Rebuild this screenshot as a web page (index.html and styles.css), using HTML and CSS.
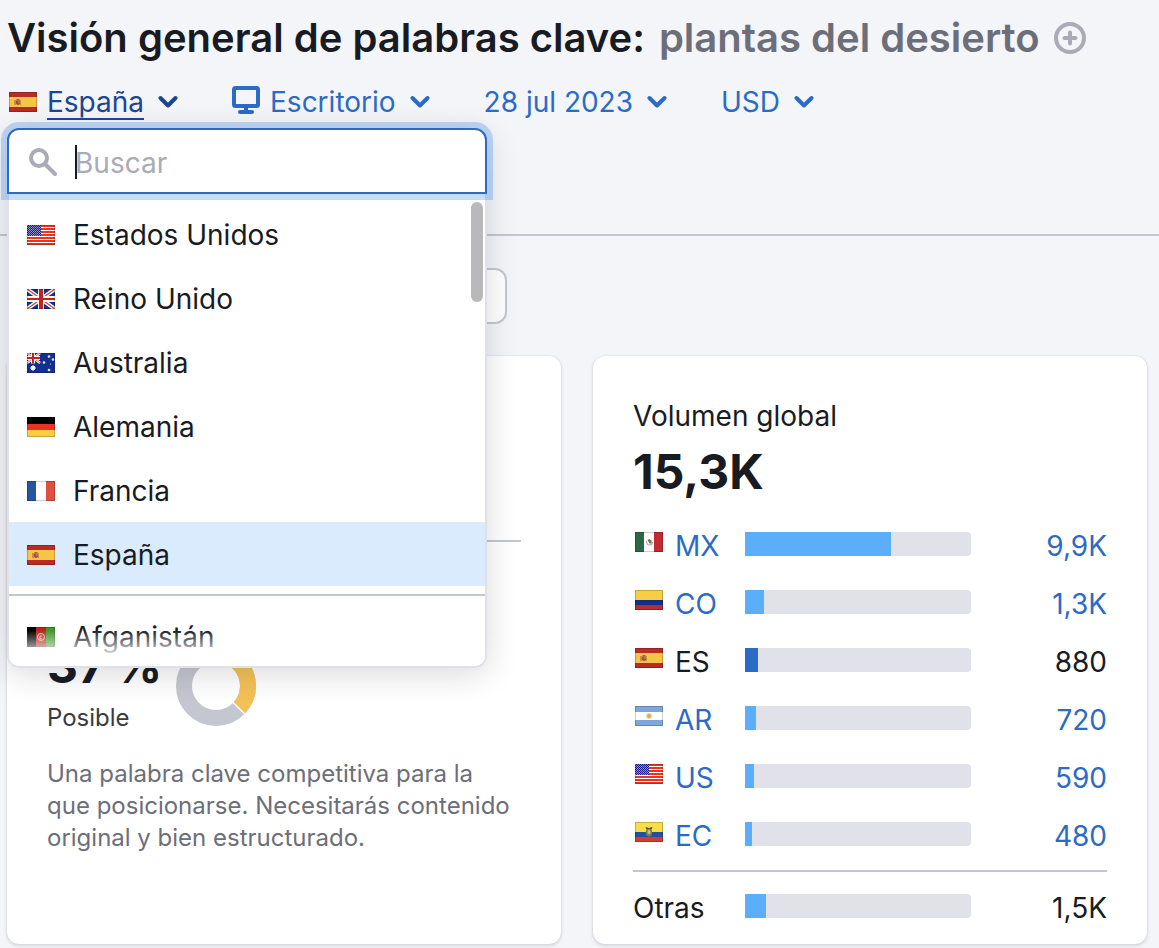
FILE: index.html
```html
<!DOCTYPE html>
<html lang="es">
<head>
    <meta charset="UTF-8">
    <meta name="viewport" content="width=device-width, initial-scale=1.0">
    <title>Visión general de palabras clave: plantas del desierto</title>
    <link rel="stylesheet" href="styles.css">
</head>
<body>
    <!-- Banderas e iconos reutilizables -->
    <svg class="sprite" aria-hidden="true">
        <defs>
            <pattern id="stars" width="2" height="2" patternUnits="userSpaceOnUse">
                <rect width="2" height="2" fill="#1a1a8c"/>
                <rect width="1" height="1" fill="#a0a0d0"/>
                <rect x="1" y="1" width="1" height="1" fill="#8080c0"/>
            </pattern>
            <symbol id="flag-es" viewBox="0 0 28 20">
                <rect width="28" height="20" fill="#b92b27"/>
                <rect y="5" width="28" height="10" fill="#f6c544"/>
                <rect x="5" y="8" width="2" height="5" fill="#c98a4a"/>
                <rect x="11" y="8" width="1" height="5" fill="#c98a4a"/>
                <path d="M7 8.500h4v3.500q-2 2-4 0z" fill="#b5483a"/>
                <path d="M7.500 7h3v1.500h-3z" fill="#9b6a2c"/>
                <rect x="9" y="9" width="2" height="2" fill="#8d8078"/>
            </symbol>
            <symbol id="flag-us" viewBox="0 0 28 20">
                <rect width="28" height="20" fill="#fff"/>
                <path d="M0 1h28M0 4h28M0 7h28M0 10h28M0 13h28M0 16h28M0 19h28" stroke="#ea3323" stroke-width="2"/>
                <rect width="14" height="11" fill="url(#stars)"/>
            </symbol>
            <symbol id="flag-gb" viewBox="0 0 28 20">
                <rect width="28" height="20" fill="#14308e"/>
                <path d="M0 0l28 20M28 0L0 20" stroke="#fff" stroke-width="4"/>
                <path d="M0 0l28 20M28 0L0 20" stroke="#c8483f" stroke-width="1.300"/>
                <path d="M14 0v20M0 10h28" stroke="#fff" stroke-width="6"/>
                <path d="M14 0v20" stroke="#c0241c" stroke-width="4"/>
                <path d="M0 10h28" stroke="#c0241c" stroke-width="2"/>
            </symbol>
            <symbol id="flag-au" viewBox="0 0 28 20">
                <rect width="28" height="20" fill="#14308e"/>
                <path d="M0 0l13 10M13 0L0 10" stroke="#fff" stroke-width="2.500"/>
                <path d="M0 0l13 10M13 0L0 10" stroke="#c8483f" stroke-width="0.800"/>
                <path d="M6 0v10.500M0 5h13" stroke="#fff" stroke-width="4"/>
                <path d="M6 0v10.500M0 5h13" stroke="#c0241c" stroke-width="2"/>
                <circle cx="6" cy="15" r="2" fill="#fff"/>
                <path d="M6 12v6M3 15h6M4 13l4 4M8 13l-4 4" stroke="#fff" stroke-width="1"/>
                <g fill="#dfe4f4">
                    <circle cx="22" cy="3.500" r="1.300"/>
                    <circle cx="17" cy="9.500" r="1.300"/>
                    <circle cx="26" cy="6.500" r="1.300"/>
                    <circle cx="22" cy="17" r="1.300"/>
                    <circle cx="23.500" cy="11" r="0.600"/>
                </g>
            </symbol>
            <symbol id="flag-de" viewBox="0 0 28 20">
                <rect width="28" height="20" fill="#ea3323"/>
                <rect width="28" height="7" fill="#000"/>
                <rect y="13" width="28" height="7" fill="#f6cd45"/>
            </symbol>
            <symbol id="flag-fr" viewBox="0 0 28 20">
                <rect width="28" height="20" fill="#fff"/>
                <rect width="9" height="20" fill="#2555a3"/>
                <rect x="19" width="9" height="20" fill="#df5043"/>
            </symbol>
            <symbol id="flag-af" viewBox="0 0 28 20">
                <rect width="28" height="20" fill="#b1261d"/>
                <rect width="9" height="20" fill="#000"/>
                <rect x="19" width="9" height="20" fill="#43962b"/>
                <circle cx="14" cy="10" r="3.500" fill="none" stroke="#e8b5b0" stroke-width="1"/>
                <path d="M15 9h-2v3h2" fill="none" stroke="#e8b5b0"/>
            </symbol>
            <symbol id="flag-mx" viewBox="0 0 28 20">
                <rect width="28" height="20" fill="#fff"/>
                <rect width="9" height="20" fill="#2c6848"/>
                <rect x="19" width="9" height="20" fill="#c02a30"/>
                <path d="M11.500 9q0 4 3 4t3-3" fill="none" stroke="#a9b89a" stroke-width="1.200"/>
                <path d="M12.500 8l2-1 2 1.500v3h-2z" fill="#8a6a4c"/>
            </symbol>
            <symbol id="flag-co" viewBox="0 0 28 20">
                <rect width="28" height="20" fill="#f8ce46"/>
                <rect y="10" width="28" height="5" fill="#10308a"/>
                <rect y="15" width="28" height="5" fill="#bc2a35"/>
            </symbol>
            <symbol id="flag-ar" viewBox="0 0 28 20">
                <rect width="28" height="20" fill="#fff"/>
                <path d="M0 0h28v6H0zM0 14h28v6H0z" fill="#7ea8dc"/>
                <circle cx="14" cy="10" r="3" fill="#f0d6a4"/>
                <circle cx="14" cy="10" r="1.800" fill="#dea545"/>
            </symbol>
            <symbol id="flag-ec" viewBox="0 0 28 20">
                <rect width="28" height="20" fill="#f8dc49"/>
                <rect y="10" width="28" height="5" fill="#20509f"/>
                <rect y="15" width="28" height="5" fill="#d93a2f"/>
                <path d="M10.500 5l3.500 1 3.500-1-1 2.500h-5z" fill="#4a4a30"/>
                <ellipse cx="14" cy="10.500" rx="3.200" ry="4" fill="#8a7a3c"/>
                <ellipse cx="14" cy="10" rx="1.500" ry="2.200" fill="#a5c8b4"/>
            </symbol>
            <symbol id="chevron" viewBox="0 0 20 14">
                <path d="M2.500 3L10 10.500 17.500 3" fill="none" stroke="currentColor" stroke-width="4" stroke-linecap="round" stroke-linejoin="round"/>
            </symbol>
        </defs>
    </svg>

    <header class="header">
        <h1 class="title">
            <span>Visión general de palabras clave:</span>
            <span class="keyword">plantas del desierto</span>
            <button class="add" type="button" aria-label="Añadir">
                <svg width="32" height="32" viewBox="0 0 32 32" fill="none" stroke="currentColor" stroke-width="4">
                    <circle cx="16" cy="16" r="14"/>
                    <path d="M16 10.500v11M10.500 16h11" stroke-linecap="round"/>
                </svg>
            </button>
        </h1>

        <div class="filters">
            <button class="filter is-open" type="button" aria-expanded="true">
                <svg class="flag"><use href="#flag-es"/></svg>
                <span class="filter-text">España</span>
                <svg class="chevron"><use href="#chevron"/></svg>
            </button>
            <button class="filter" type="button">
                <svg class="device" width="28" height="32" viewBox="0 0 28 32" fill="none" stroke="currentColor" stroke-width="4">
                    <rect x="2" y="2" width="24" height="18" rx="1.500"/>
                    <path d="M14 22v3"/>
                    <path d="M8 26h12" stroke-linecap="round"/>
                </svg>
                <span class="filter-text">Escritorio</span>
                <svg class="chevron"><use href="#chevron"/></svg>
            </button>
            <button class="filter" type="button">
                <span class="filter-text">28 jul 2023</span>
                <svg class="chevron"><use href="#chevron"/></svg>
            </button>
            <button class="filter" type="button">
                <span class="filter-text">USD</span>
                <svg class="chevron"><use href="#chevron"/></svg>
            </button>

            <!-- Selector de país -->
            <div class="dropdown">
                <label class="search">
                    <svg width="28" height="28" viewBox="0 0 28 28" fill="none" stroke="currentColor" stroke-width="4">
                        <circle cx="10" cy="10" r="8"/>
                        <path d="M16 16l10 10" stroke-linecap="round"/>
                    </svg>
                    <input type="text" placeholder="Buscar" aria-label="Buscar">
                    <span class="caret"></span>
                </label>
                <div class="menu">
                    <ul class="options">
                        <li><button class="option" type="button"><svg class="flag"><use href="#flag-us"/></svg>Estados Unidos</button></li>
                        <li><button class="option" type="button"><svg class="flag"><use href="#flag-gb"/></svg>Reino Unido</button></li>
                        <li><button class="option" type="button"><svg class="flag"><use href="#flag-au"/></svg>Australia</button></li>
                        <li><button class="option" type="button"><svg class="flag"><use href="#flag-de"/></svg>Alemania</button></li>
                        <li><button class="option" type="button"><svg class="flag"><use href="#flag-fr"/></svg>Francia</button></li>
                        <li><button class="option is-selected" type="button"><svg class="flag"><use href="#flag-es"/></svg>España</button></li>
                        <li class="options-rest"><button class="option" type="button"><svg class="flag"><use href="#flag-af"/></svg>Afganistán</button></li>
                    </ul>
                    <span class="scroll-thumb"></span>
                </div>
            </div>
        </div>
    </header>

    <main class="content">
        <input class="field" type="text" aria-label="Palabra clave">

        <div class="cards">
            <section class="card">
                <div class="card-top"></div>
                <div class="difficulty">
                    <div>
                        <div class="number">37&thinsp;%</div>
                        <div class="level">Posible</div>
                    </div>
                    <svg width="80" height="80" viewBox="0 0 80 80" fill="none" stroke-width="16">
                        <circle cx="40" cy="40" r="32" stroke="#c4c7cf"/>
                        <circle cx="40" cy="40" r="32" stroke="#f4c157" pathLength="100" stroke-dasharray="37 63" transform="rotate(-90 40 40)"/>
                        <path d="M40 40l32 31M40 40V0" stroke="#fff" stroke-width="1.500"/>
                    </svg>
                </div>
                <p class="advice">Una palabra clave competitiva para la que posicionarse. Necesitarás contenido original y bien estructurado.</p>
            </section>

            <section class="card">
                <h2 class="label">Volumen global</h2>
                <div class="number">15,3K</div>
                <table class="volumes">
                    <tr>
                        <td><div class="country"><svg class="flag"><use href="#flag-mx"/></svg><a href="#">MX</a></div></td>
                        <td><div class="bar"><div class="bar-fill" style="width: 64.6%"></div></div></td>
                        <td class="value"><a href="#">9,9K</a></td>
                    </tr>
                    <tr>
                        <td><div class="country"><svg class="flag"><use href="#flag-co"/></svg><a href="#">CO</a></div></td>
                        <td><div class="bar"><div class="bar-fill" style="width: 8.4%"></div></div></td>
                        <td class="value"><a href="#">1,3K</a></td>
                    </tr>
                    <tr>
                        <td><div class="country"><svg class="flag"><use href="#flag-es"/></svg>ES</div></td>
                        <td><div class="bar"><div class="bar-fill is-current" style="width: 5.8%"></div></div></td>
                        <td class="value">880</td>
                    </tr>
                    <tr>
                        <td><div class="country"><svg class="flag"><use href="#flag-ar"/></svg><a href="#">AR</a></div></td>
                        <td><div class="bar"><div class="bar-fill" style="width: 4.9%"></div></div></td>
                        <td class="value"><a href="#">720</a></td>
                    </tr>
                    <tr>
                        <td><div class="country"><svg class="flag"><use href="#flag-us"/></svg><a href="#">US</a></div></td>
                        <td><div class="bar"><div class="bar-fill" style="width: 4%"></div></div></td>
                        <td class="value"><a href="#">590</a></td>
                    </tr>
                    <tr>
                        <td><div class="country"><svg class="flag"><use href="#flag-ec"/></svg><a href="#">EC</a></div></td>
                        <td><div class="bar"><div class="bar-fill" style="width: 3.1%"></div></div></td>
                        <td class="value"><a href="#">480</a></td>
                    </tr>
                    <tr class="others">
                        <td>Otras</td>
                        <td><div class="bar"><div class="bar-fill" style="width: 9.3%"></div></div></td>
                        <td class="value">1,5K</td>
                    </tr>
                </table>
            </section>
        </div>
    </main>
</body>
</html>
```

FILE: styles.css
```css
:root {
    --texto: #191b23;
    --gris: #6c6e79;
    --icono: #a9abb6;
    --linea: #c4c7cf;
    --azul: #2b6bc6;
    --azul-oscuro: #1c4790;
    --barra: #5aaefa;
}

* {
    box-sizing: border-box;
}

body {
    margin: 0;
    background: #f4f5f9;
    color: var(--texto);
    font-family: Inter, "Liberation Sans", sans-serif;
    font-size: 28px;
    line-height: 32px;
}

button,
input {
    font: inherit;
    color: inherit;
}

button {
    padding: 0;
    border: none;
    background: none;
    cursor: pointer;
}

a {
    color: var(--azul);
    text-decoration: none;
}

.sprite {
    position: absolute;
    width: 0;
    height: 0;
}

.flag {
    flex: none;
    width: 28px;
    height: 20px;
    margin-left: 2px;
    outline: 1px solid rgba(0, 0, 0, 0.2);
    outline-offset: -1px;
}

/* Cabecera */
.header {
    padding: 14px 12px 116px 7px;
    border-bottom: 2px solid var(--linea);
}

.title {
    display: flex;
    align-items: center;
    gap: 14px;
    margin: 0 0 24px;
    font-size: 40px;
    line-height: 48px;
    font-weight: 600;
}

.keyword {
    color: var(--gris);
}

.add {
    display: flex;
    color: var(--icono);
}

.filters {
    position: relative;
    display: flex;
    align-items: flex-start;
    gap: 54px;
}

.filter {
    display: flex;
    align-items: center;
    color: var(--azul);
}

.filter-text {
    margin-bottom: -2px;
    border-bottom: 2px solid transparent;
}

.flag + .filter-text,
.device + .filter-text {
    margin-left: 10px;
}

.is-open {
    color: var(--azul-oscuro);
}

.is-open .filter-text {
    border-color: currentColor;
}

.chevron {
    width: 20px;
    height: 14px;
    margin-left: 14px;
}

/* Desplegable */
.dropdown {
    position: absolute;
    top: 100%;
    left: 0;
    z-index: 1;
    width: 480px;
    margin-top: 10px;
    border-radius: 12px;
    box-shadow: 0 6px 32px rgba(25, 27, 35, 0.16);
}

.search {
    position: relative;
    z-index: 1;
    display: flex;
    align-items: center;
    gap: 18px;
    height: 66px;
    padding: 2px 20px 0;
    background: #fff;
    border: 2px solid var(--azul);
    border-radius: 12px 12px 0 0;
    box-shadow: 0 0 0 6px rgba(43, 125, 235, 0.27);
    color: var(--icono);
}

.search input {
    flex: 1;
    min-width: 0;
    padding: 2px 0 0;
    border: none;
    outline: none;
    background: none;
    color: var(--texto);
}

.search input::placeholder {
    color: var(--icono);
    opacity: 1;
}

.caret {
    position: absolute;
    left: 66px;
    width: 2px;
    height: 34px;
    background: var(--texto);
}

.menu {
    position: relative;
    overflow: hidden;
    background: #fff;
    border: 2px solid #dfe0e9;
    border-top: none;
    border-radius: 0 0 12px 12px;
}

.menu::after {
    content: "";
    position: absolute;
    left: 0;
    right: 0;
    bottom: 0;
    height: 36px;
    background: linear-gradient(rgba(255, 255, 255, 0), #fff 80%);
}

.options {
    max-height: 472px;
    margin: 0;
    padding: 8px 0 0;
    overflow: hidden;
    list-style: none;
}

.option {
    display: flex;
    align-items: center;
    gap: 18px;
    width: 100%;
    height: 64px;
    padding: 2px 16px 0;
}

.option.is-selected {
    background: #dbebfe;
}

.options-rest {
    margin-top: 8px;
    padding-top: 8px;
    border-top: 2px solid var(--linea);
}

.scroll-thumb {
    position: absolute;
    top: 8px;
    right: 2px;
    width: 12px;
    height: 100px;
    border-radius: 6px;
    background: #b9b9bb;
}

/* Contenido */
.content {
    padding: 32px 12px 4px 7px;
}

.field {
    display: block;
    width: 500px;
    max-width: 100%;
    height: 56px;
    padding: 0 16px;
    background: #fff;
    border: 2px solid var(--linea);
    border-radius: 12px;
}

.cards {
    display: grid;
    grid-template-columns: 1fr 1fr;
    gap: 32px;
    margin-top: 32px;
}

.card {
    padding: 40px 40px 22px;
    background: #fff;
    border-radius: 12px;
    box-shadow: 0 0 2px rgba(25, 27, 35, 0.16), 0 2px 4px rgba(25, 27, 35, 0.12);
}

.card-top {
    height: 146px;
    border-bottom: 2px solid var(--linea);
}

.number {
    font-size: 48px;
    line-height: 56px;
    font-weight: 700;
}

.difficulty {
    display: flex;
    align-items: center;
    gap: 14px;
    margin-top: 96px;
}

.level {
    margin-top: 8px;
    font-size: 24px;
    color: #3a3b40;
}

.advice {
    margin: 24px 0 0;
    font-size: 24px;
    color: var(--gris);
}

.label {
    margin: 0 0 8px;
    font-size: 28px;
    line-height: 40px;
    font-weight: 400;
}

.volumes {
    width: 100%;
    margin-top: 22px;
    border-spacing: 0;
    table-layout: fixed;
    line-height: 28px;
}

.volumes td {
    padding: 10px 0 20px;
    vertical-align: top;
}

.volumes td:first-child {
    width: 112px;
}

.volumes td:last-child {
    width: 136px;
}

.country {
    display: flex;
    align-items: flex-start;
    gap: 12px;
}

.volumes .value {
    text-align: right;
}

.volumes .others td {
    padding: 22px 0 0;
    border-top: 2px solid var(--linea);
}

.bar {
    height: 24px;
    overflow: hidden;
    background: #e0e1e9;
    border-radius: 0 4px 4px 0;
}

.bar-fill {
    height: 100%;
    background: var(--barra);
}

.bar-fill.is-current {
    background: var(--azul);
}
```
